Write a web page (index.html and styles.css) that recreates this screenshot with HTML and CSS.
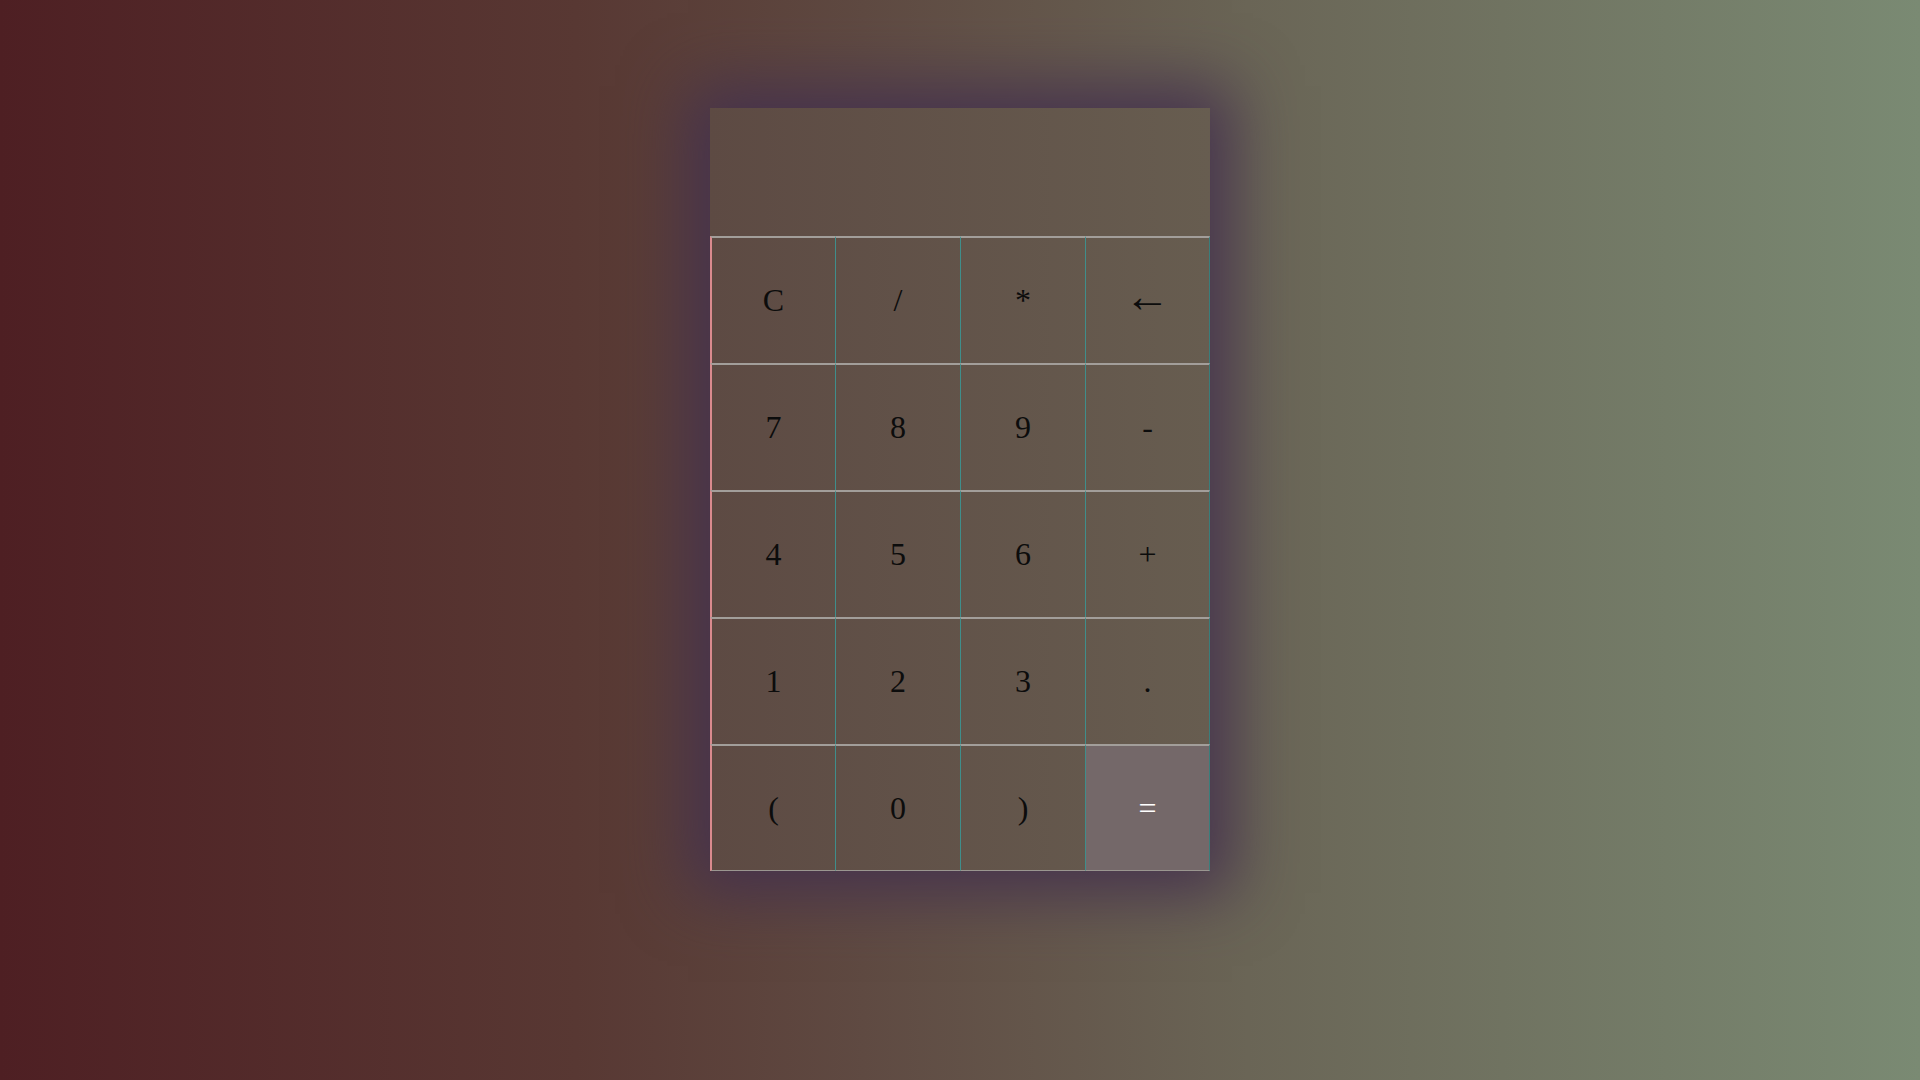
FILE: index.html
```html
<!DOCTYPE html>
<html>
<head>
<meta charset="utf-8">
<link rel="stylesheet" href="styles.css">
</head>
<body>
<div class="calc">
  <div class="display"></div>
  <div class="keys">
    <button class="key first">C</button>
    <button class="key">/</button>
    <button class="key">*</button>
    <button class="key last arrow">&larr;</button>
    <button class="key first">7</button>
    <button class="key">8</button>
    <button class="key">9</button>
    <button class="key last">-</button>
    <button class="key first">4</button>
    <button class="key">5</button>
    <button class="key">6</button>
    <button class="key last">+</button>
    <button class="key first">1</button>
    <button class="key">2</button>
    <button class="key">3</button>
    <button class="key last">.</button>
    <button class="key first bottom">(</button>
    <button class="key bottom">0</button>
    <button class="key bottom">)</button>
    <button class="key last bottom equals">=</button>
  </div>
</div>
</body>
</html>
```
FILE: styles.css
```css
html, body {
  margin: 0;
  height: 100%;
}
body {
  background: linear-gradient(to right, #4e1f23 0%, #583833 30%, #5f4a42 45%, #6a6556 65%, #7a8a73 100%);
  font-family: "Liberation Serif", "Times New Roman", serif;
  display: flex;
  justify-content: center;
  align-items: flex-start;
  padding-top: 108px;
  box-sizing: border-box;
}
.calc {
  width: 500px;
  background: linear-gradient(to right, #5d4a43, #675d50);
  box-shadow: 0 0 60px 22px rgba(68, 50, 78, 0.95);
}
.display {
  height: 128px;
}
.keys {
  display: grid;
  grid-template-columns: repeat(4, 1fr);
  grid-template-rows: repeat(5, 127px);
}
.key {
  background: transparent;
  border: none;
  border-top: 2px solid #a29e9a;
  border-left: 1px solid #3f8e8b;
  font-family: "Liberation Serif", "Times New Roman", serif;
  font-size: 32px;
  color: #0c0c0c;
  padding: 0;
  margin: 0;
}
.key.first {
  border-left: 2px solid #d98a8e;
}
.key.last {
  border-right: 1px solid #3a7e7c;
}
.key.bottom {
  border-bottom: 1px solid #9a9690;
}
.key.arrow {
  font-size: 46px;
  line-height: 1;
  padding-bottom: 8px;
}
.key.equals {
  background: #746869;
  color: #fff;
}
```
